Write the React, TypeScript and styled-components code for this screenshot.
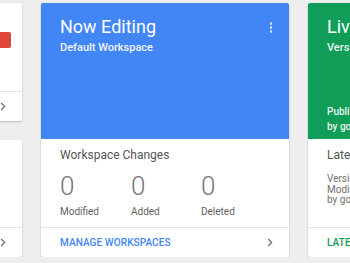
import styled, { createGlobalStyle } from 'styled-components';

const GlobalStyle = createGlobalStyle`
  html, body {
    margin: 0;
    padding: 0;
    background: #eeeeee;
    overflow: hidden;
  }
  body {
    font-family: Roboto, 'Liberation Sans', Arial, sans-serif;
  }
`;

const Row = styled.div`
  display: flex;
  gap: 19px;
  margin-left: -226px;
  padding-top: 3px;
  height: 254px;
`;

const Column = styled.div`
  display: flex;
  flex-direction: column;
  gap: 19px;
  flex: 0 0 248px;
`;

const Card = styled.div`
  background: #ffffff;
  border-radius: 2px;
  box-shadow: 0 1px 2px rgba(0, 0, 0, 0.22), 0 0 1px rgba(0, 0, 0, 0.08);
  display: flex;
  flex-direction: column;
  flex: 0 0 248px;
  overflow: hidden;
`;

const StackCard = styled(Card)`
  flex: 1 1 0;
`;

const Header = styled.div<{ $color: string }>`
  background: ${(p) => p.$color};
  color: #ffffff;
  display: flex;
  flex-direction: column;
  height: 136px;
  box-sizing: border-box;
  padding: 13px 19px 5px 19px;
  position: relative;
`;

const Title = styled.h2`
  font-size: 18px;
  font-weight: 400;
  line-height: 22px;
  margin: 0;
  white-space: nowrap;
`;

const Subtitle = styled.div`
  font-size: 11px;
  font-weight: 500;
  line-height: 14px;
  margin-top: 3px;
  opacity: 0.92;
  white-space: nowrap;
`;

const Published = styled.div`
  margin-top: auto;
  font-size: 10px;
  font-weight: 500;
  line-height: 15px;
  opacity: 0.9;
  white-space: nowrap;
`;

const Kebab = styled.div`
  position: absolute;
  top: 19px;
  right: 17px;
  display: flex;
  flex-direction: column;
  gap: 1.5px;

  & span {
    width: 2.5px;
    height: 2.5px;
    border-radius: 50%;
    background: rgba(255, 255, 255, 0.75);
  }
`;

const Body = styled.div`
  flex: 1;
  padding: 9px 19px 0 19px;
  color: #616161;
`;

const SectionTitle = styled.div`
  font-size: 12px;
  line-height: 14px;
  color: #555555;
  white-space: nowrap;
`;

const Stats = styled.div`
  display: grid;
  grid-template-columns: 71px 70px 70px;
  margin-top: 9px;
`;

const Stat = styled.div`
  display: flex;
  flex-direction: column;
`;

const StatValue = styled.div`
  font-size: 26px;
  font-weight: 300;
  line-height: 30px;
  color: #757575;
`;

const StatLabel = styled.div`
  font-size: 10px;
  line-height: 12px;
  margin-top: 5px;
  color: #616161;
`;

const Details = styled.div`
  margin-top: 12px;
  font-size: 10px;
  line-height: 10.5px;
  color: #707070;
  white-space: nowrap;
`;

const ActionArea = styled.div`
  flex: 1;
  display: flex;
  justify-content: flex-end;
  padding: 29px 11px 0 19px;
`;

const RedButton = styled.div`
  width: 96px;
  height: 16px;
  background: #e0463c;
  border-radius: 2px;
`;

const Footer = styled.div`
  height: 30px;
  flex-shrink: 0;
  box-sizing: border-box;
  border-top: 1px solid #e6e6e6;
  display: flex;
  align-items: center;
  justify-content: space-between;
  padding: 0 16px 0 19px;
`;

const FooterLink = styled.span<{ $color: string }>`
  color: ${(p) => p.$color};
  font-size: 10px;
  font-weight: 500;
  letter-spacing: 0.1px;
  white-space: nowrap;
`;

function Chevron() {
  return (
    <svg width="6" height="9" viewBox="0 0 6 9">
      <polyline
        points="1.2,1 4.6,4.5 1.2,8"
        fill="none"
        stroke="#757575"
        strokeWidth="1.4"
      />
    </svg>
  );
}

function App() {
  return (
    <>
      <GlobalStyle />
      <Row>
        <Column>
          <StackCard>
            <ActionArea>
              <RedButton />
            </ActionArea>
            <Footer>
              <span />
              <Chevron />
            </Footer>
          </StackCard>
          <StackCard>
            <Body />
            <Footer>
              <span />
              <Chevron />
            </Footer>
          </StackCard>
        </Column>

        <Card>
          <Header $color="#4285f4">
            <Title>Now Editing</Title>
            <Subtitle>Default Workspace</Subtitle>
            <Kebab>
              <span />
              <span />
              <span />
            </Kebab>
          </Header>
          <Body>
            <SectionTitle>Workspace Changes</SectionTitle>
            <Stats>
              <Stat>
                <StatValue>0</StatValue>
                <StatLabel>Modified</StatLabel>
              </Stat>
              <Stat>
                <StatValue>0</StatValue>
                <StatLabel>Added</StatLabel>
              </Stat>
              <Stat>
                <StatValue>0</StatValue>
                <StatLabel>Deleted</StatLabel>
              </Stat>
            </Stats>
          </Body>
          <Footer>
            <FooterLink $color="#4285f4">MANAGE WORKSPACES</FooterLink>
            <Chevron />
          </Footer>
        </Card>

        <Card>
          <Header $color="#0f9d58">
            <Title>Live Version</Title>
            <Subtitle>Version 1</Subtitle>
            <Published>
              Published 2 hours ago
              <br />
              by google@example.com
            </Published>
          </Header>
          <Body>
            <SectionTitle>Latest Version</SectionTitle>
            <Details>
              Version 1
              <br />
              Modified 2 hours ago
              <br />
              by google@example.com
            </Details>
          </Body>
          <Footer>
            <FooterLink $color="#0f9d58">LATEST VERSION</FooterLink>
            <Chevron />
          </Footer>
        </Card>
      </Row>
    </>
  );
}

export default App;
